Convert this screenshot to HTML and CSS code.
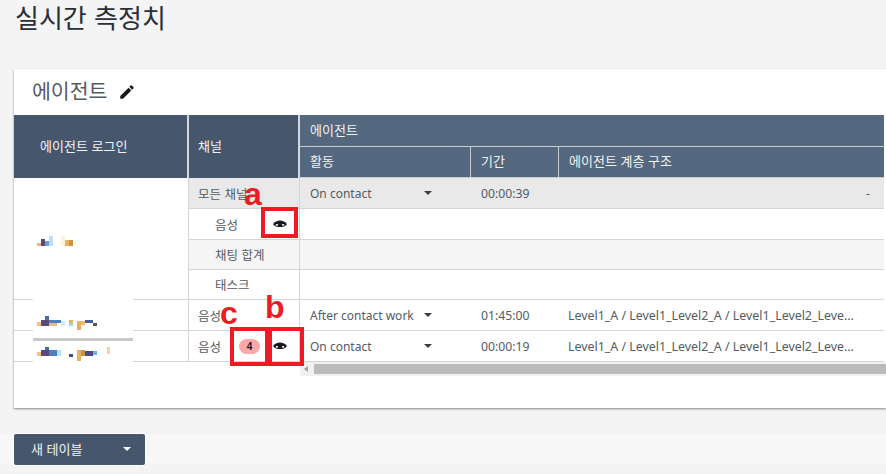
FILE: index.html
```html
<!DOCTYPE html>
<html lang="ko">
<head>
<meta charset="utf-8">
<title>실시간 측정치</title>
<link rel="stylesheet" href="styles.css">
</head>
<body>
<div class="page">
  <h1 class="page-title">실시간 측정치</h1>
  <section class="card">
    <header class="card-head">
      <h2 class="card-title">에이전트</h2>
      <svg class="pencil" viewBox="0 0 24 24"><path d="M3 17.25V21h3.75L17.81 9.94l-3.75-3.75L3 17.25zM20.71 7.04c.39-.39.39-1.02 0-1.41l-2.34-2.34c-.39-.39-1.02-.39-1.41 0l-1.83 1.83 3.75 3.75 1.83-1.83z"/></svg>
    </header>
    <table class="metrics">
      <colgroup><col class="c-login"><col class="c-channel"><col class="c-activity"><col class="c-time"><col class="c-path"></colgroup>
      <thead>
        <tr class="head-row">
          <th class="dark login-head" rowspan="2">에이전트 로그인</th>
          <th class="dark" rowspan="2">채널</th>
          <th colspan="3">에이전트</th>
        </tr>
        <tr class="head-row">
          <th>활동</th><th>기간</th><th>에이전트 계층 구조</th>
        </tr>
      </thead>
      <tbody>
        <tr class="row tall grey">
          <td class="login white" rowspan="4"></td>
          <td class="channel">모든 채널</td>
          <td class="bare"><div class="activity"><span>On contact</span><i class="caret"></i></div></td>
          <td class="bare">00:00:39</td>
          <td class="bare dash">-</td>
        </tr>
        <tr class="row tall">
          <td class="channel"><div class="chan-line indent"><span>음성</span><svg class="eye" viewBox="0 0 14 8"><path d="M0 4.2C3 -.8 11 -.8 14 4.2C11 8 3 8 0 4.2z"/><ellipse class="glint" cx="3.9" cy="4.9" rx="1.3" ry=".8"/><ellipse class="glint" cx="10.1" cy="4.9" rx="1.3" ry=".8"/></svg></div></td>
          <td class="sep" colspan="3"></td>
        </tr>
        <tr class="row pale">
          <td class="channel"><div class="indent">채팅 합계</div></td>
          <td class="sep" colspan="3"></td>
        </tr>
        <tr class="row">
          <td class="channel"><div class="indent">태스크</div></td>
          <td class="sep" colspan="3"></td>
        </tr>
        <tr class="row tall">
          <td class="login"></td>
          <td class="channel">음성</td>
          <td class="bare"><div class="activity"><span>After contact work</span><i class="caret"></i></div></td>
          <td class="bare">01:45:00</td>
          <td class="bare"><span class="path">Level1_A / Level1_Level2_A / Level1_Level2_Level3_A</span></td>
        </tr>
        <tr class="row tall">
          <td class="login"></td>
          <td class="channel"><div class="chan-line"><span>음성</span><span class="badge">4</span><svg class="eye" viewBox="0 0 14 8"><path d="M0 4.2C3 -.8 11 -.8 14 4.2C11 8 3 8 0 4.2z"/><ellipse class="glint" cx="3.9" cy="4.9" rx="1.3" ry=".8"/><ellipse class="glint" cx="10.1" cy="4.9" rx="1.3" ry=".8"/></svg></div></td>
          <td class="bare"><div class="activity"><span>On contact</span><i class="caret"></i></div></td>
          <td class="bare">00:00:19</td>
          <td class="bare"><span class="path">Level1_A / Level1_Level2_A / Level1_Level2_Level3_A</span></td>
        </tr>
      </tbody>
    </table>
    <div class="scrollbar"><i class="arrow"></i><div class="thumb"></div></div>
  </section>
  <div class="toolbar">
    <button class="new-table"><span>새 테이블</span><i class="caret light"></i></button>
  </div>

  <svg class="redaction" viewBox="0 0 140 200" shape-rendering="crispEdges">
    <rect x="33" y="121" width="100" height="63" fill="#fff"/>
    <rect x="33" y="160" width="100" height="3" fill="#c9c9c9"/>
    <g class="pix-a">
      <rect x="37" y="65" width="4" height="3" fill="#eeb878"/><rect x="41" y="61" width="4" height="7" fill="#5b4a78"/><rect x="45" y="63" width="4" height="5" fill="#6f9fd6"/><rect x="49" y="58" width="4" height="10" fill="#b9e0f9"/><rect x="61" y="58" width="4" height="10" fill="#fdf3d8"/><rect x="65" y="62" width="4" height="6" fill="#eab05c"/><rect x="69" y="62" width="4" height="6" fill="#cf9040"/>
    </g>
    <g class="pix-b">
      <rect x="37" y="144" width="4" height="4" fill="#f2c48c"/><rect x="41" y="142" width="8" height="6" fill="#5b4a78"/><rect x="45" y="138" width="4" height="4" fill="#3f6fb5"/><rect x="49" y="142" width="12" height="3" fill="#4a7fc4"/><rect x="49" y="145" width="8" height="3" fill="#e6bb8c"/><rect x="61" y="143" width="4" height="5" fill="#cfeefc"/><rect x="69" y="142" width="4" height="3" fill="#eab05c"/><rect x="69" y="145" width="4" height="3" fill="#9fd4f4"/><rect x="77" y="143" width="4" height="9" fill="#eab05c"/><rect x="81" y="143" width="4" height="4" fill="#e8b878"/><rect x="85" y="142" width="8" height="3" fill="#4a5c98"/><rect x="93" y="145" width="4" height="3" fill="#555"/>
    </g>
    <g class="pix-c">
      <rect x="37" y="174" width="4" height="4" fill="#f2c48c"/><rect x="41" y="172" width="8" height="6" fill="#5b4a78"/><rect x="45" y="169" width="4" height="3" fill="#3f6fb5"/><rect x="49" y="172" width="8" height="6" fill="#4a7fc4"/><rect x="57" y="172" width="4" height="6" fill="#b9e0f9"/><rect x="69" y="176" width="4" height="3" fill="#4a4a78"/><rect x="77" y="172" width="4" height="11" fill="#eab05c"/><rect x="81" y="172" width="4" height="6" fill="#c99048"/><rect x="85" y="173" width="8" height="5" fill="#4a4a88"/><rect x="93" y="173" width="4" height="4" fill="#6fb0e8"/><rect x="107" y="169" width="3" height="7" fill="#f2d4a8"/>
    </g>
  </svg>

  <div class="mark mark-a"></div>
  <div class="mark mark-c"></div>
  <div class="mark mark-b"></div>
  <span class="letter letter-a">a</span>
  <span class="letter letter-c">c</span>
  <span class="letter letter-b">b</span>
</div>
</body>
</html>
```
FILE: styles.css
```css
* { box-sizing: border-box; }
html, body { margin: 0; height: 100%; overflow: hidden; }
body {
  background: #f4f4f4;
  font-family: "Noto Sans", "Noto Sans CJK KR", sans-serif;
  font-size: 12.2px;
  color: #545b64;
}
.page { position: relative; width: 886px; height: 474px; overflow: hidden; padding-left: 14px; }
.page-title {
  margin: 0;
  height: 69px;
  padding-left: 1px;
  font-family: "Noto Sans CJK KR", sans-serif;
  font-size: 26px;
  font-weight: 400;
  line-height: 33px;
  color: #2b2f36;
}
.card {
  width: 872px;
  height: 339px;
  background: #fff;
  box-shadow: 0 1px 2px rgba(0, 0, 0, .45);
}
.card-head { height: 46px; display: flex; align-items: center; gap: 11px; padding: 0 0 4px 18px; }
.card-title {
  margin: 0;
  font-family: "Noto Sans CJK KR", sans-serif;
  font-size: 20.5px;
  font-weight: 400;
  color: #545b64;
}
.pencil { width: 18px; height: 18px; fill: #16191f; margin-top: 4px; }

.metrics { width: 870px; table-layout: fixed; border-collapse: separate; border-spacing: 0; }
.c-login { width: 175px; }
.c-channel { width: 111px; }
.c-activity { width: 171px; }
.c-time { width: 88px; }
.c-path { width: 325px; }

.metrics th {
  background: #54687f;
  color: #f2f2f2;
  font-family: "Noto Sans CJK KR", sans-serif;
  font-size: 13px;
  font-weight: 400;
  text-align: left;
  padding: 0 10px 2px;
  border-right: 1px solid #c5ccd3;
  border-bottom: 1px solid #c5ccd3;
}
.metrics th:last-child { border-right: 0; }
.metrics th.dark { background: #46576d; border-right: 2px solid #d5d8dc; border-bottom: 0; padding-left: 9px; }
.metrics th.login-head { padding-left: 26px; }
.head-row { height: 31.5px; }

.row { height: 30px; }
.row.tall { height: 31px; }
.row.grey td { background: #e9e9e9; }
.row.pale td { background: #f5f5f5; }
.metrics td {
  padding: 0 10px;
  border-bottom: 1px solid #d5d5d5;
  white-space: nowrap;
  overflow: hidden;
}
.metrics td.login, .metrics td.white { background: #fff; border-right: 1px solid #d5d5d5; }
.metrics td.channel { padding: 0 12px 0 9px; border-right: 1px solid #d5d5d5; font-family: "Noto Sans CJK KR", sans-serif; font-size: 12.5px; }
.metrics td.dash { text-align: right; padding-right: 14px; }
.indent { padding-left: 17px; }
.chan-line { display: flex; align-items: center; }
.chan-line .eye { margin-left: auto; }
.badge {
  margin-left: auto;
  margin-right: 13px;
  width: 21px;
  height: 15px;
  border-radius: 8px;
  background: #f9a9a9;
  color: #16191f;
  font-family: "Liberation Sans", sans-serif;
  font-size: 10px;
  font-weight: 700;
  line-height: 15px;
  text-align: center;
}
.chan-line .badge + .eye { margin-left: 0; }
.eye { width: 14px; height: 8px; fill: #16191f; flex: none; }
.eye .glint { fill: #fff; }
.activity { display: flex; align-items: center; justify-content: space-between; padding-right: 29px; font-size: 12px; }
.caret {
  display: block;
  width: 0; height: 0;
  border-left: 4px solid transparent;
  border-right: 4px solid transparent;
  border-top: 4.5px solid #3a3f46;
}
.caret.light { border-top-color: #fff; }
.path { display: block; width: 288px; margin-left: -1px; font-size: 12.4px; overflow: hidden; text-overflow: ellipsis; }

.scrollbar { display: flex; align-items: center; height: 14px; margin: 0 0 0 286px; background: #f1f1f1; }
.arrow { display: block; margin-left: 4px; width: 0; height: 0; border-top: 3px solid transparent; border-bottom: 3px solid transparent; border-right: 4px solid #a0a0a0; }
.thumb { margin-left: 6px; flex: 1; height: 10px; background: #bbb; }

.toolbar { height: 30px; margin: 26px 0 0 -14px; padding-left: 14px; background: #f7f7f7; }
.new-table {
  display: flex;
  align-items: center;
  justify-content: space-between;
  width: 131px;
  height: 31px;
  padding: 0 14px 2px 17px;
  border: 0;
  border-radius: 2px;
  box-shadow: 0 0 0 1px #fff;
  background: #46576d;
  color: #f2f2f2;
  font-family: "Noto Sans CJK KR", sans-serif;
  font-size: 13px;
  font-weight: 400;
}

.redaction { position: absolute; left: 0; top: 178px; width: 140px; height: 200px; }
.mark { position: absolute; border: 4px solid #ed1c24; }
.mark-a { left: 261px; top: 207px; width: 37px; height: 31px; }
.mark-c { left: 230px; top: 327px; width: 39px; height: 39px; }
.mark-b { left: 268px; top: 327px; width: 36px; height: 39px; }
.letter {
  position: absolute;
  font-family: "Liberation Sans", sans-serif;
  font-size: 32px;
  font-weight: 700;
  line-height: 32px;
  color: #ed1c24;
}
.letter-a { left: 244px; top: 178px; }
.letter-c { left: 220px; top: 297px; }
.letter-b { left: 265px; top: 291px; }
```
